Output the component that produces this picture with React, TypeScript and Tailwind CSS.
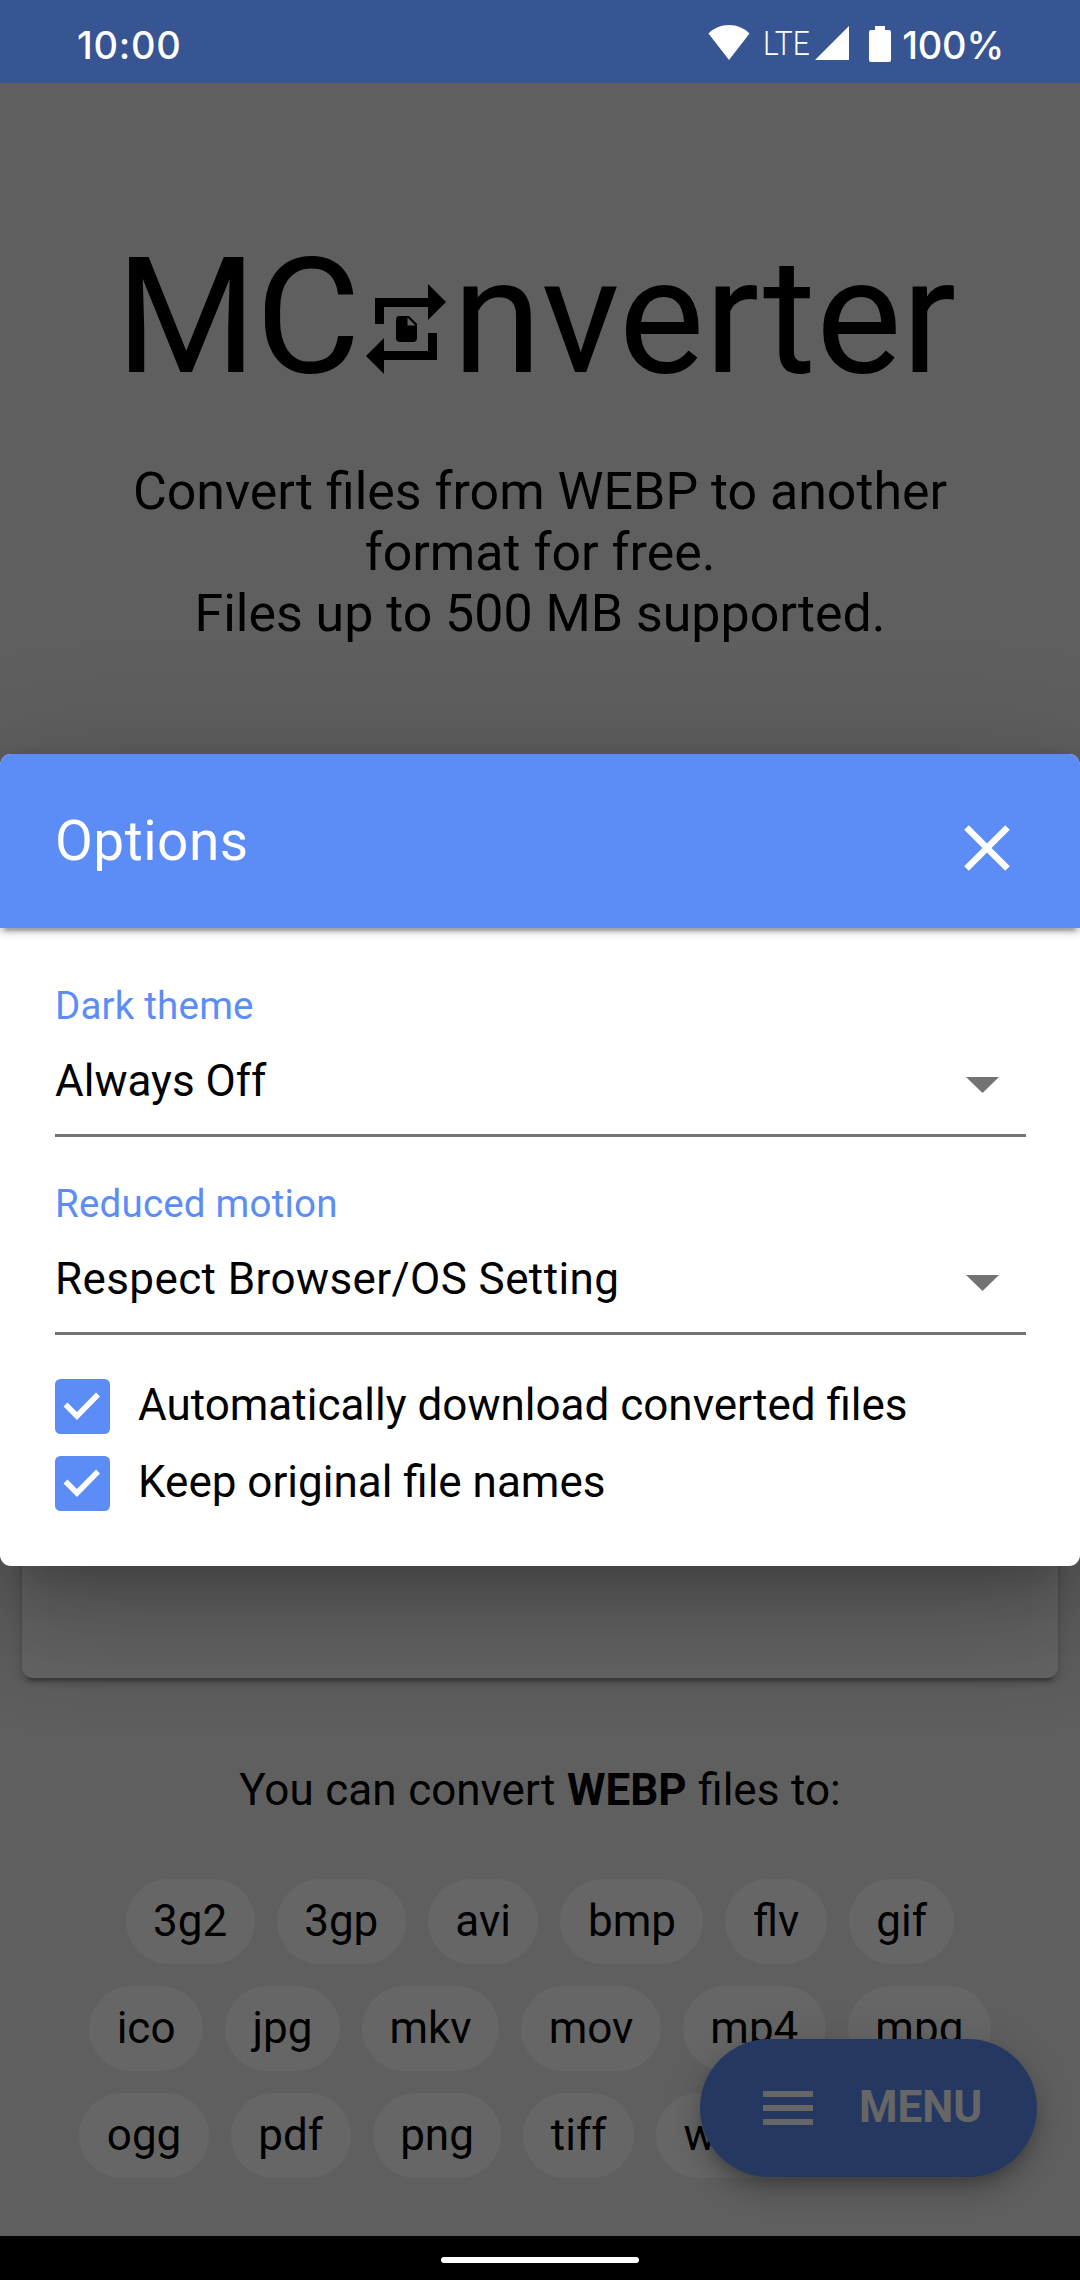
import React from "react";

const rows = [
  ["3g2", "3gp", "avi", "bmp", "flv", "gif"],
  ["ico", "jpg", "mkv", "mov", "mp4", "mpg"],
  ["ogg", "pdf", "png", "tiff", "webm", "wmv"],
];

function StatusBar() {
  return (
    <header className="flex h-[83px] shrink-0 items-center bg-[#375592] pl-[77px] pr-[76px] text-white">
      <span className="pt-[6px] font-[Inter,sans-serif] text-[38px] font-medium leading-[44px] tracking-[0.700px]">10:00</span>
      <div className="ml-auto flex items-center">
        <svg className="mr-[13px] mt-[2px] h-[35px] w-[42px]" viewBox="0 0 42 35" fill="currentColor">
          <path d="M21 0C13 0 6 3 0.5 8.500L21 35 41.500 8.500C36 3 29 0 21 0z" />
        </svg>
        <span className="mt-[2px] h-[40px] w-[48px] origin-left scale-x-[0.88] whitespace-nowrap font-[Roboto,sans-serif] text-[34px] font-light leading-[40px]">LTE</span>
        <svg className="mr-[20px] ml-[4px] mt-[3px] h-[34px] w-[34px]" viewBox="0 0 34 34" fill="currentColor">
          <path d="M34 0V34H0z" />
        </svg>
        <svg className="mr-[11px] mt-[4px] h-[36px] w-[22px]" viewBox="0 0 22 36" fill="currentColor">
          <path d="M6 0h10v4h4q2 0 2 2v28q0 2-2 2H2q-2 0-2-2V6q0-2 2-2h4z" />
        </svg>
        <span className="pt-[6px] font-[Inter,sans-serif] text-[38px] font-medium leading-[44px] tracking-[-0.200px]">100%</span>
      </div>
    </header>
  );
}

function ConvertMark() {
  return (
    <svg className="ml-[7px] mr-[6px] inline-block h-[90px] w-[80px]" viewBox="0 0 80 90">
      <path d="M9 40V14h53V0l18 18-18 18V23H18v17zM71 49v27H18v14L0 72l18-18v13h44V49z" />
      <path d="M33 32h10l8 8v14q0 4-4 4H34q-4 0-4-4V36q0-4 3-4z" />
      <path d="M41.500 33.500v8h8z" fill="#eee" />
    </svg>
  );
}

function Select({ label, children }: { label: string; children: React.ReactNode }) {
  return (
    <div className="flex h-[198px] flex-col">
      <div className="h-[58px] text-[38.500px] leading-[46px] tracking-[0.200px] text-[#5c8df6]">{label}</div>
      <div className="flex h-[96px] justify-between border-b-[3px] border-[#737373] pr-[27px]">
        <span className="mt-[10px] text-[44px] leading-[60px]">{children}</span>
        <svg className="mt-[36px] h-[16px] w-[33px]" viewBox="0 0 33 16" fill="#737373">
          <path d="M0 0h33L16.500 16z" />
        </svg>
      </div>
    </div>
  );
}

function Check({ label }: { label: string }) {
  return (
    <label className="flex h-[77px] items-start">
      <span className="mr-[28px] flex h-[55px] w-[55px] rounded-[5.500px] bg-[#5c8df6]">
        <svg className="h-[55px] w-[55px]" viewBox="0 0 55 55" fill="none" stroke="white" strokeWidth="5.500">
          <path d="M10.500 25.500L22 37 43 15.500" />
        </svg>
      </span>
      <span className="text-[44px] leading-[52px]">{label}</span>
    </label>
  );
}

function OptionsDialog() {
  return (
    <section className="absolute left-0 top-[671px] h-[812px] w-full rounded-[11px] bg-white text-black shadow-[0_30px_41px_-19px_rgba(0,0,0,0.2),0_66px_104px_8px_rgba(0,0,0,0.14),0_25px_126px_22px_rgba(0,0,0,0.12)]">
      <div className="flex h-[174px] items-center justify-between rounded-t-[11px] bg-[#5c8df6] pl-[55px] pr-[70px] text-white shadow-[0_8px_3px_-5px_rgba(0,0,0,0.2),0_5px_5px_0_rgba(0,0,0,0.14),0_3px_14px_0_rgba(0,0,0,0.12)]">
        <h2 className="text-[55px] leading-[64px] tracking-[0.5px]">Options</h2>
        <svg className="mt-[13px] h-[46px] w-[46px]" viewBox="0 0 46 46" stroke="white" strokeWidth="6.500">
          <path d="M2.500 2.500l41 41M43.500 2.500l-41 41" />
        </svg>
      </div>
      <div className="pl-[55px] pr-[54px] pt-[55px]">
        <Select label="Dark theme">Always Off</Select>
        <Select label="Reduced motion"><span className="tracking-[0.4px]">Respect Browser/OS Setting</span></Select>
        <Check label="Automatically download converted files" />
        <Check label="Keep original file names" />
      </div>
    </section>
  );
}

export default function App() {
  return (
    <div className="flex h-[2280px] w-[1080px] flex-col overflow-hidden bg-black font-[Roboto,sans-serif]">
      <StatusBar />
      <main className="relative h-[2153px] shrink-0 overflow-hidden bg-[#eeeeee] text-black">
        <h1 className="mt-[144px] flex h-[180px] items-baseline justify-center whitespace-nowrap pr-[8px] text-[161.500px] leading-[180px]">
          <span className="tracking-[-1.200px]">MC</span>
          <span><ConvertMark /></span>
          <span>nverter</span>
        </h1>
        <p className="mt-[54px] text-center text-[51.900px] leading-[61px]">
          Convert files from WEBP to another<br />format for free.<br />Files up to 500 MB supported.
        </p>
        <div className="mx-[22px] mt-[124px] h-[910px] rounded-[11px] bg-white shadow-[0_8px_3px_-5px_rgba(0,0,0,0.2),0_5px_5px_0_rgba(0,0,0,0.14),0_3px_14px_0_rgba(0,0,0,0.12)]" />
        <p className="mt-[86px] text-center text-[44px] leading-[52px] [word-spacing:0.700px]">
          You can convert <b>WEBP</b> files to:
        </p>
        <div className="mt-[63px] flex flex-col gap-[22px]">
          {rows.map((row) => (
            <div key={row[0]} className="flex justify-center gap-[22px]">
              {row.map((t) => (
                <span key={t} className="h-[85px] rounded-full bg-white px-[27.500px] text-[44px] leading-[85px]">{t}</span>
              ))}
            </div>
          ))}
        </div>
        <button className="absolute bottom-[59px] right-[43px] flex h-[138px] w-[337px] items-center rounded-full bg-[#5c8df6] pl-[63px] text-white shadow-[0_8px_14px_-3px_rgba(0,0,0,0.2),0_16px_28px_0_rgba(0,0,0,0.14),0_3px_50px_0_rgba(0,0,0,0.12)]">
          <svg className="mr-[46px] h-[34px] w-[50px]" viewBox="0 0 50 34" fill="currentColor">
            <path d="M0 0h50v6H0zM0 14h50v6H0zM0 28h50v6H0z" />
          </svg>
          <span className="pb-[2px] text-[44px] font-bold leading-[52px]">MENU</span>
        </button>
        <div className="absolute inset-0 bg-black/60" />
        <OptionsDialog />
      </main>
      <footer className="flex h-[44px] items-center justify-center bg-black pt-[4px]">
        <div className="h-[6px] w-[198px] rounded-full bg-white" />
      </footer>
    </div>
  );
}
